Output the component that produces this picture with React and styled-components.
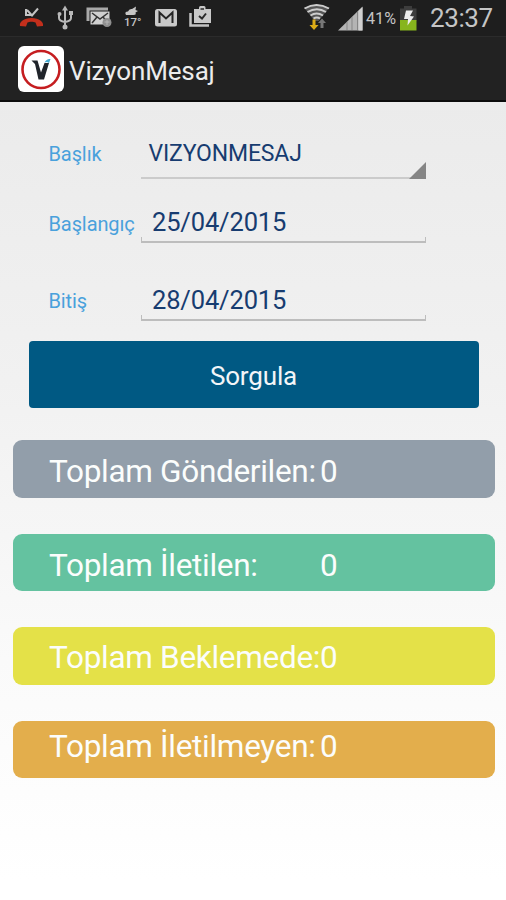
import styled, { createGlobalStyle } from "styled-components";

const totals = [
  { label: "Toplam Gönderilen:", value: 0, color: "#929eaa", shift: 6 },
  { label: "Toplam İletilen:", value: 0, color: "#64c2a0", shift: 5 },
  { label: "Toplam Beklemede:", value: 0, color: "#e4e148", shift: 3 },
  { label: "Toplam İletilmeyen:", value: 0, color: "#e3ae4c", shift: -7 },
];

export default function App() {
  return (
    <Screen>
      <GlobalStyle />
      <StatusBar>
        <NotificationIcons />
        <SystemIcons />
        <Clock>23:37</Clock>
      </StatusBar>
      <TitleBar>
        <Logo />
        <Title>VizyonMesaj</Title>
      </TitleBar>
      <Form>
        <Field $height={77}>
          <Label $height={45}>Başlık</Label>
          <Spinner>
            VIZYONMESAJ
            <Corner />
          </Spinner>
        </Field>
        <Field $height={64}>
          <Label $height={39}>Başlangıç</Label>
          <DateBox>25/04/2015</DateBox>
        </Field>
        <Field $height={78}>
          <Label $height={40}>Bitiş</Label>
          <DateBox>28/04/2015</DateBox>
        </Field>
      </Form>
      <QueryButton>Sorgula</QueryButton>
      <Totals>
        {totals.map((t) => (
          <Total key={t.label} $color={t.color} $shift={t.shift}>
            <TotalLabel>{t.label}</TotalLabel>
            <TotalValue>{t.value}</TotalValue>
          </Total>
        ))}
      </Totals>
    </Screen>
  );
}

function NotificationIcons() {
  return (
    <IconStrip width="220" height="36" viewBox="0 0 220 36">
      {/* missed call */}
      <path d="M26 9v6h5M27 10l5 5.500 6-7" fill="none" stroke="#c4c4c4" strokeWidth="2" />
      <path d="M20 26c-1-4 4-8 11.500-8s12.500 4 11.500 8l-6 .5-1.500-4c-2-1-6-1-8 0l-1.500 4z" fill="#c32f1c" />
      {/* usb */}
      <g fill="none" stroke="#b9b9b9" strokeWidth="2">
        <path d="M65 9v18M59 14v4q0 3 6 4M71 13v5q0 3-6 4" />
      </g>
      <path d="M65 5.500l3 5h-6z" fill="#b9b9b9" />
      <circle cx="65" cy="27" r="2.500" fill="#b9b9b9" />
      <circle cx="59.500" cy="14" r="2" fill="#b9b9b9" />
      <path d="M69 11h4v4h-4z" fill="#b9b9b9" />
      {/* messages */}
      <path d="M88 21V9h20" fill="none" stroke="#a9a9a9" strokeWidth="3" />
      <path d="M90.500 11.500h19v13h-19z" fill="#d0d0d0" />
      <path d="M92 13l8 6 8-6M92 23l5-6M108 23l-5-6" fill="none" stroke="#333" strokeWidth="1.500" />
      <circle cx="107" cy="22.500" r="4.500" fill="#8f8f8f" />
      <path d="M104.500 22h5M107 20v5" stroke="#b5b5b5" />
      {/* weather */}
      <path d="M126 15q-2-3.500 2-3.500 1-3 4-2.500l4-2.500-.5 3.500 2.500 1-2.500 1.500q1 2.500-2 2.500z" fill="#c6c6c6" />
      <text x="124" y="26" fontSize="11.500" fontWeight="500" fill="#c4c4c4">17°</text>
      {/* mail */}
      <rect x="155" y="9" width="22" height="17.500" rx="2.500" fill="#c9c9c9" />
      <path d="M159.500 23V12.500L166 18.500l6.500-6V23" fill="none" stroke="#242424" strokeWidth="2" />
      {/* clipboards */}
      <path d="M190.500 13v12.500h18.500" fill="none" stroke="#c4c4c4" strokeWidth="2.500" />
      <path d="M194 9h5V7.500q0-1.500 1.500-1.500h3.500q1.500 0 1.500 1.500V9h5.500v14h-17z" fill="#c9c9c9" />
      <path d="M200.500 9h3.500" stroke="#292929" strokeWidth="1.500" />
      <path d="M199 16l3 2.500 4-5" fill="none" stroke="#292929" strokeWidth="2" />
    </IconStrip>
  );
}

function SystemIcons() {
  return (
    <IconStrip width="122" height="36" viewBox="300 0 122 36">
      <path d="M304.500 8q12-7 24.500 0L318.500 21h-4z" fill="#555" />
      <g fill="none" stroke="#cdcdcd" strokeWidth="2">
        <path d="M304.500 8.500q12-7 24.500 0" />
        <path d="M307.500 12q9.500-5.500 18.500 0" />
        <path d="M310.500 15.500q6-4 12.500 0" />
        <path d="M313.500 18.500q3.500-2 6.500 0" />
      </g>
      <path d="M312.500 19.500h3v5.500h3l-4.500 5-4.500-5h3z" fill="#dbab17" />
      <path d="M320.500 28v-5h-2.500l4-4.500 4 4.500h-2.500v5z" fill="#777" />
      <path d="M338 30.500L362.500 6.500v24z" fill="#b4b4b4" />
      <path d="M347 30V22M352 30V17M357.500 30V12" stroke="#858585" />
      <path d="M358.500 11l4-4v23.500h-4z" fill="#d0d0d0" />
      <text x="366" y="24" fontSize="17" fill="#c4c4c4" textLength="30" lengthAdjust="spacingAndGlyphs">41%</text>
      <path d="M400 8.500h4V6h8v2.500h4.500V21H400z" fill="#3d3d3d" />
      <path d="M400 20h16.500v10.500H400z" fill="#87b51d" />
      <path d="M406 10.500h7L410 16l4 .5-6.500 9 .5-6.500h-4z" fill="#ededed" />
    </IconStrip>
  );
}

function Logo() {
  return (
    <svg width="46" height="46" viewBox="0 0 46 46">
      <rect width="46" height="46" rx="6" fill="#fff" />
      <circle cx="23" cy="23.500" r="18.500" fill="none" stroke="#c51d20" strokeWidth="2.600" />
      <path d="M13.500 14.500h6l3.500 12 3.500-9.500h4.500L26 33.500h-5.500L17 18z" fill="#20242a" />
      <path d="M26.500 16.500q2-4 6-3.500l-1.500 4q-2-1.500-4.500-.5z" fill="#45a9cf" />
    </svg>
  );
}

const GlobalStyle = createGlobalStyle`
  body {
    margin: 0;
    font-family: Roboto, sans-serif;
  }
`;

const Screen = styled.div`
  height: 900px;
  overflow: hidden;
  background: linear-gradient(#ebebeb 102px, #f1f1f1 380px, #fafafa 660px, #fff 880px);
`;

const StatusBar = styled.div`
  display: flex;
  height: 36px;
  background: #1e1e1e;
`;

const IconStrip = styled.svg`
  flex: none;
  font-family: Roboto, sans-serif;

  & + & {
    margin-left: 80px;
  }
`;

const Clock = styled.div`
  margin-left: 8px;
  font-size: 26px;
  line-height: 36px;
  color: #c5c5c5;
  letter-spacing: -0.4px;
`;

const TitleBar = styled.div`
  box-sizing: border-box;
  display: flex;
  align-items: center;
  height: 66px;
  padding-left: 18px;
  gap: 5px;
  background: #222;
  border-top: 1px solid #2b2b2b;
  border-bottom: 2px solid #0b0b0b;
`;

const Title = styled.h1`
  margin: 0;
  padding-top: 4px;
  font-size: 26px;
  font-weight: 400;
  line-height: 36px;
  letter-spacing: -0.15px;
  color: #ececec;
`;

const Form = styled.div`
  padding-left: 48.5px;
`;

const Field = styled.div`
  box-sizing: border-box;
  display: flex;
  align-items: flex-end;
  height: ${({ $height }) => $height}px;
`;

const Label = styled.label`
  width: 92px;
  height: ${({ $height }) => $height}px;
  font-size: 20px;
  line-height: 40px;
  letter-spacing: -0.1px;
  color: #49a1dc;
  white-space: nowrap;
`;

const Spinner = styled.div`
  position: relative;
  box-sizing: border-box;
  width: 285px;
  height: 39px;
  padding-left: 8px;
  border-bottom: 2px solid #cbcbcb;
  font-size: 23px;
  line-height: 28px;
  letter-spacing: -0.15px;
  color: #173c70;
`;

const Corner = styled.span`
  position: absolute;
  right: 0;
  bottom: -2px;
  border-left: 17px solid transparent;
  border-bottom: 17px solid #858585;
`;

const DateBox = styled.div`
  position: relative;
  box-sizing: border-box;
  width: 285px;
  height: 42px;
  padding-left: 11.5px;
  border-bottom: 2px solid #bdbdbd;
  font-size: 25.5px;
  line-height: 43px;
  letter-spacing: -0.15px;
  color: #173c70;

  &::before {
    content: "";
    position: absolute;
    left: 0;
    right: 0;
    bottom: 0;
    height: 4px;
    border: solid #bdbdbd;
    border-width: 0 1px;
  }
`;

const QueryButton = styled.button`
  display: block;
  width: 450px;
  height: 67px;
  margin: 20px 0 0 28.5px;
  padding: 2px 0 0;
  border: 0;
  border-radius: 4px;
  background: #005983;
  color: #f2f5f8;
  font: 26px Roboto, sans-serif;
  letter-spacing: -0.15px;
`;

const Totals = styled.div`
  display: flex;
  flex-direction: column;
  gap: 35.9px;
  margin: 32.1px 11px 0 13px;
`;

const Total = styled.div`
  box-sizing: border-box;
  display: flex;
  height: 57.6px;
  padding-left: 36px;
  border-radius: 9px;
  background: ${({ $color }) => $color};
  color: #fbfdfc;
  font-size: 31.5px;
  line-height: ${({ $shift }) => 58 + $shift}px;
`;

const TotalLabel = styled.span`
  width: 271px;
  white-space: nowrap;
  letter-spacing: -0.3px;
`;

const TotalValue = styled.span``;
